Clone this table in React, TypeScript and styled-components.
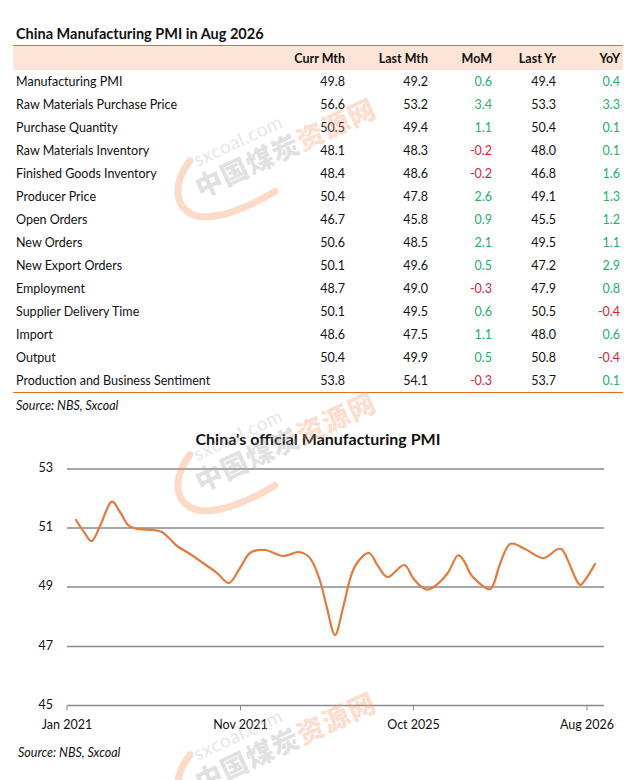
import styled, { createGlobalStyle } from 'styled-components';

const GlobalStyle = createGlobalStyle`
  body {
    margin: 0;
    background: #fff;
    font-family: Lato, "Liberation Sans", sans-serif;
    color: #111;
  }
`;

type PmiRow = [string, number, number, number, number, number];

const rows: PmiRow[] = [
  ['Manufacturing PMI', 49.8, 49.2, 0.6, 49.4, 0.4],
  ['Raw Materials Purchase Price', 56.6, 53.2, 3.4, 53.3, 3.3],
  ['Purchase Quantity', 50.5, 49.4, 1.1, 50.4, 0.1],
  ['Raw Materials Inventory', 48.1, 48.3, -0.2, 48.0, 0.1],
  ['Finished Goods Inventory', 48.4, 48.6, -0.2, 46.8, 1.6],
  ['Producer Price', 50.4, 47.8, 2.6, 49.1, 1.3],
  ['Open Orders', 46.7, 45.8, 0.9, 45.5, 1.2],
  ['New Orders', 50.6, 48.5, 2.1, 49.5, 1.1],
  ['New Export Orders', 50.1, 49.6, 0.5, 47.2, 2.9],
  ['Employment', 48.7, 49.0, -0.3, 47.9, 0.8],
  ['Supplier Delivery Time', 50.1, 49.5, 0.6, 50.5, -0.4],
  ['Import', 48.6, 47.5, 1.1, 48.0, 0.6],
  ['Output', 50.4, 49.9, 0.5, 50.8, -0.4],
  ['Production and Business Sentiment', 53.8, 54.1, -0.3, 53.7, 0.1],
];

// traced points of the PMI line, in page pixels
const linePoints: [number, number][] = [
  [76, 519], [84, 531], [92, 540], [100, 525], [111, 501], [120, 511], [128, 524],
  [138, 528], [153, 529], [162, 531], [170, 538], [177, 545], [190, 553], [203, 562],
  [217, 572], [229, 582], [240, 567], [250, 552], [265, 549], [283, 555], [298, 551],
  [308, 555], [314, 564], [321, 583], [327, 607], [335, 634], [343, 607], [350, 578],
  [357, 562], [369, 552], [378, 565], [388, 576], [404, 564], [413, 577], [423, 587],
  [432, 587], [447, 573], [457, 555], [464, 560], [472, 575], [488, 588], [494, 582],
  [500, 563], [510, 543], [525, 548], [543, 557], [558, 548], [565, 553], [578, 582],
  [585, 579], [595, 563],
];

const smoothPath = (pts: [number, number][]) => {
  let d = `M${pts[0][0]},${pts[0][1]}`;
  for (let i = 0; i < pts.length - 1; i++) {
    const p0 = pts[i - 1] || pts[i];
    const p1 = pts[i];
    const p2 = pts[i + 1];
    const p3 = pts[i + 2] || p2;
    const c1x = p1[0] + (p2[0] - p0[0]) / 6;
    const c1y = p1[1] + (p2[1] - p0[1]) / 6;
    const c2x = p2[0] - (p3[0] - p1[0]) / 6;
    const c2y = p2[1] - (p3[1] - p1[1]) / 6;
    d += ` C${c1x.toFixed(1)},${c1y.toFixed(1)} ${c2x.toFixed(1)},${c2y.toFixed(1)} ${p2[0]},${p2[1]}`;
  }
  return d;
};

const yTicks = [
  { label: '53', y: 468 },
  { label: '51', y: 527 },
  { label: '49', y: 586 },
  { label: '47', y: 645.5 },
  { label: '45', y: 704.5 },
];

const xTicks = [
  { label: 'Jan 2021', x: 67 },
  { label: 'Nov 2021', x: 240.5 },
  { label: 'Oct 2025', x: 413.5 },
  { label: 'Aug 2026', x: 587 },
];

const Page = styled.div`
  position: relative;
  width: 636px;
  height: 780px;
  overflow: hidden;
`;

const TableTitle = styled.h1`
  margin: 0 13px;
  padding: 25px 3px 2px;
  font-size: 14.5px;
  line-height: 18px;
  font-weight: 700;
  border-bottom: 1.5px solid #e2701f;
`;

const Row = styled.div<{ $head?: boolean }>`
  display: grid;
  grid-template-columns: 1fr 83px 83px 64px 64px 64px;
  align-items: center;
  margin: 0 13px;
  padding: 0 3px;
  height: ${p => (p.$head ? 24 : 23)}px;
  font-size: 12.5px;
  font-weight: ${p => (p.$head ? 700 : 400)};
  background: ${p => (p.$head ? '#fce5d6' : 'transparent')};
`;

const TableBody = styled.div`
  margin: 0 13px 0;
  border-bottom: 1.5px solid #e2701f;
  & > div {
    margin: 0;
  }
`;

const Cell = styled.span<{ $tone?: 'up' | 'down' }>`
  text-align: right;
  color: ${p => (p.$tone === 'up' ? '#22b06a' : p.$tone === 'down' ? '#d8243a' : '#111')};
`;

const Label = styled.span`
  text-align: left;
`;

const Source = styled.p<{ $left: number }>`
  margin: 0;
  padding: 5px 0 0 ${p => p.$left}px;
  font-size: 12.5px;
  line-height: 16px;
  font-style: italic;
  color: #111;
`;

const ChartTitle = styled.h2`
  margin: 0;
  padding-top: 15px;
  text-align: center;
  font-size: 16px;
  line-height: 20px;
  font-weight: 700;
`;

const ChartSvg = styled.svg`
  display: block;
  margin-top: 4px;
`;

const Watermark = styled.div<{ $top: number }>`
  position: absolute;
  left: 152px;
  top: ${p => p.$top}px;
  width: 270px;
  height: 96px;
  transform: rotate(-25deg);
  pointer-events: none;
`;

const WatermarkArc = styled.svg`
  position: absolute;
  left: 0;
  top: 0;
`;

const WatermarkText = styled.div`
  position: relative;
  display: flex;
  flex-direction: column;
  padding: 14px 0 0 34px;
`;

const Domain = styled.span`
  font-family: Lato, sans-serif;
  font-size: 19px;
  line-height: 20px;
  letter-spacing: 0.5px;
  color: rgba(190, 190, 190, 0.4);
  padding-left: 10px;
`;

const Brand = styled.span`
  font-family: "Noto Sans CJK SC", sans-serif;
  font-size: 27px;
  line-height: 32px;
  font-weight: 900;
  letter-spacing: 1px;
  color: rgba(170, 170, 170, 0.36);
`;

const BrandAccent = styled.span`
  color: rgba(248, 160, 120, 0.36);
`;

const WatermarkMark = ({ top }: { top: number }) => (
  <Watermark $top={top}>
    <WatermarkArc width="270" height="96" viewBox="0 0 270 96">
      <path
        d="M40 22 C14 36 8 56 18 70 C30 86 64 90 104 86"
        fill="none"
        stroke="rgba(245, 140, 80, 0.32)"
        strokeWidth="7"
        strokeLinecap="round"
      />
    </WatermarkArc>
    <WatermarkText>
      <Domain>sxcoal.com</Domain>
      <Brand>
        中国煤炭<BrandAccent>资源网</BrandAccent>
      </Brand>
    </WatermarkText>
  </Watermark>
);

const tone = (v: number) => (v < 0 ? 'down' : 'up');

const App: React.FC = () => {
  return (
    <Page>
      <GlobalStyle />
      <TableTitle>China Manufacturing PMI in Aug 2026</TableTitle>
      <Row $head>
        <Label />
        <Cell>Curr Mth</Cell>
        <Cell>Last Mth</Cell>
        <Cell>MoM</Cell>
        <Cell>Last Yr</Cell>
        <Cell>YoY</Cell>
      </Row>
      <TableBody>
        {rows.map(([name, curr, last, mom, lastYr, yoy]) => (
          <Row key={name}>
            <Label>{name}</Label>
            <Cell>{curr.toFixed(1)}</Cell>
            <Cell>{last.toFixed(1)}</Cell>
            <Cell $tone={tone(mom)}>{mom.toFixed(1)}</Cell>
            <Cell>{lastYr.toFixed(1)}</Cell>
            <Cell $tone={tone(yoy)}>{yoy.toFixed(1)}</Cell>
          </Row>
        ))}
      </TableBody>
      <Source $left={16}>Source: NBS, Sxcoal</Source>

      <ChartTitle>China's official Manufacturing PMI</ChartTitle>
      <ChartSvg width="636" height="287" viewBox="0 452 636 287">
        {yTicks.map(t => (
          <g key={t.label}>
            <line x1="67" x2="604" y1={t.y} y2={t.y} stroke="#8a8a8a" strokeWidth="1.3" />
            <text
              x="53"
              y={t.y}
              textAnchor="end"
              dominantBaseline="middle"
              fontSize="12.5"
              fontFamily="Lato, sans-serif"
              fill="#111"
            >
              {t.label}
            </text>
          </g>
        ))}
        {xTicks.map(t => (
          <g key={t.label}>
            <line x1={t.x} x2={t.x} y1="704.5" y2="709.5" stroke="#8a8a8a" strokeWidth="1" />
            <text
              x={t.x}
              y="725"
              textAnchor="middle"
              dominantBaseline="middle"
              fontSize="12.5"
              fontFamily="Lato, sans-serif"
              fill="#111"
            >
              {t.label}
            </text>
          </g>
        ))}
        <path
          d={smoothPath(linePoints)}
          fill="none"
          stroke="#e6793f"
          strokeWidth="2.2"
          strokeLinejoin="round"
          strokeLinecap="round"
        />
      </ChartSvg>
      <Source $left={18}>Source: NBS, Sxcoal</Source>

      <WatermarkMark top={96} />
      <WatermarkMark top={390} />
      <WatermarkMark top={690} />
    </Page>
  );
};

export default App;
